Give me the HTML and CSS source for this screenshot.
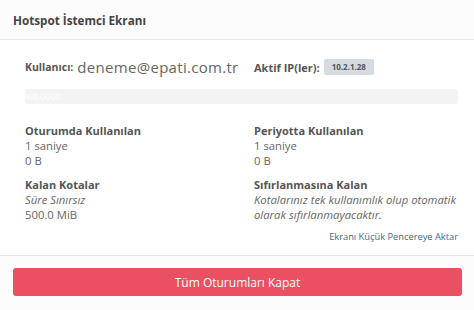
FILE: index.html
```html
<!DOCTYPE html>
<html lang="tr">
<head>
    <meta charset="UTF-8">
    <title>Hotspot İstemci Ekranı</title>
    <link rel="stylesheet" href="styles.css">
</head>
<body>
    <div class="panel">
        <div class="panel-header">
            <h3>Hotspot İstemci Ekranı</h3>
        </div>

        <div class="panel-body">
            <div class="user-row">
                <div class="user-cell">
                    <span class="label">Kullanıcı:</span>
                    <span class="user-name">deneme@epati.com.tr</span>
                </div>
                <div class="user-cell">
                    <span class="label label-big">Aktif IP(ler):</span>
                    <span class="badge">10.2.1.28</span>
                </div>
            </div>

            <div class="progress">
                <div class="progress-bar" style="width: 0%">%0.0000</div>
            </div>

            <div class="stats">
                <div class="stat">
                    <h4>Oturumda Kullanılan</h4>
                    <div>1 saniye</div>
                    <div>0 B</div>
                </div>
                <div class="stat">
                    <h4>Periyotta Kullanılan</h4>
                    <div>1 saniye</div>
                    <div>0 B</div>
                </div>
                <div class="stat">
                    <h4>Kalan Kotalar</h4>
                    <div><i>Süre Sınırsız</i></div>
                    <div>500.0 MiB</div>
                </div>
                <div class="stat">
                    <h4>Sıfırlanmasına Kalan</h4>
                    <div><i>Kotalarınız tek kullanımlık olup otomatik olarak sıfırlanmayacaktır.</i></div>
                </div>
            </div>

            <div class="link-row">
                <a href="#" class="small-link">Ekranı Küçük Pencereye Aktar</a>
            </div>
        </div>

        <div class="panel-footer">
            <button class="close-btn">Tüm Oturumları Kapat</button>
        </div>
    </div>
</body>
</html>
```

FILE: styles.css
```css
body {
    margin: 0;
    font-family: "Open Sans", Arial, sans-serif;
    background: #fff;
    color: #666;
}

.panel {
    width: 474px;
}

.panel-header {
    height: 39px;
    padding: 0 13px;
    display: flex;
    align-items: center;
    background: #fcfcfc;
    border-bottom: 1px solid #e6e6e6;
}

.panel-header h3 {
    margin: 0;
    font-size: 11.7px;
    font-weight: 700;
    color: #444;
}

.panel-body {
    padding: 17px 16px 0 25px;
}

.user-row {
    display: grid;
    grid-template-columns: 229px 1fr;
    height: 18px;
    align-items: center;
}

.user-cell {
    display: flex;
    align-items: center;
    gap: 4px;
}

.label {
    font-size: 10.5px;
    font-weight: 700;
    color: #555;
}

.label-big {
    font-size: 11px;
}

.user-name {
    font-size: 15px;
    letter-spacing: 0.3px;
    color: #666;
}

.badge {
    background: #d4dbe1;
    color: #555;
    font-size: 8px;
    font-weight: 700;
    padding: 3px 8px;
    line-height: 10px;
    border-radius: 2px;
}

.progress {
    margin-top: 14px;
    height: 15px;
    background: #f3f3f3;
    border-radius: 3px;
    overflow: hidden;
}

.progress-bar {
    height: 100%;
    font-size: 9px;
    line-height: 15px;
    color: #fff;
    white-space: nowrap;
}

.stats {
    margin-top: 19px;
    margin-right: -6px;
    display: grid;
    grid-template-columns: 229px 1fr;
    row-gap: 9px;
}

.stat {
    font-size: 11.3px;
    line-height: 15px;
    color: #666;
}

.stat h4 {
    margin: 0;
    font-size: 11px;
    font-weight: 700;
    color: #555;
}

.stat i {
    color: #666;
}

.link-row {
    text-align: right;
    margin-top: 5px;
    height: 14px;
    line-height: 14px;
}

.small-link {
    font-size: 9.3px;
    color: #3d6a96;
    text-decoration: none;
}

.panel-footer {
    margin-top: 14px;
    padding: 12px 12px 15px 13px;
    background: #fcfcfc;
    border-top: 1px solid #e6e6e6;
}

.close-btn {
    display: block;
    width: 100%;
    height: 28px;
    border: none;
    border-radius: 3px;
    background: #ea5062;
    color: #fff;
    font-family: "Open Sans", Arial, sans-serif;
    font-size: 12px;
}
```
